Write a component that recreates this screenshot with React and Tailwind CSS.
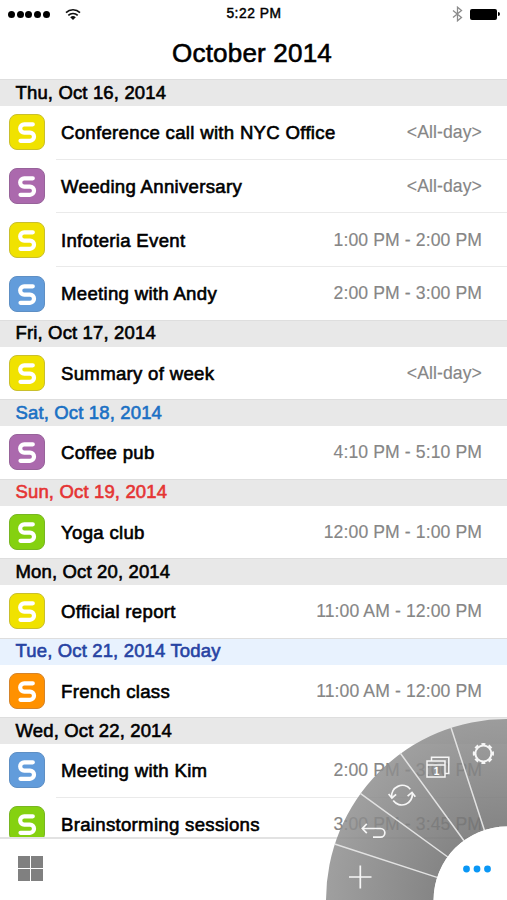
const COLORS = {
  yellow: "bg-[#f0e200] border-[#c9bf2c]",
  purple: "bg-[#ab69ad] border-[#97639a]",
  blue: "bg-[#629cdb] border-[#5e8fc4]",
  green: "bg-[#85d110] border-[#78b622]",
  orange: "bg-[#ff9100] border-[#d5842a]",
};

const DAYS = [
  {
    date: "Thu, Oct 16, 2014",
    events: [
      ["yellow", "Conference call with NYC Office", "<All-day>"],
      ["purple", "Weeding Anniversary", "<All-day>"],
      ["yellow", "Infoteria Event", "1:00 PM - 2:00 PM"],
      ["blue", "Meeting with Andy", "2:00 PM - 3:00 PM"],
    ],
  },
  { date: "Fri, Oct 17, 2014", events: [["yellow", "Summary of week", "<All-day>"]] },
  { date: "Sat, Oct 18, 2014", tone: "text-[#1a70c4]", events: [["purple", "Coffee pub", "4:10 PM - 5:10 PM"]] },
  { date: "Sun, Oct 19, 2014", tone: "text-[#e53434]", events: [["green", "Yoga club", "12:00 PM - 1:00 PM"]] },
  { date: "Mon, Oct 20, 2014", events: [["yellow", "Official report", "11:00 AM - 12:00 PM"]] },
  {
    date: "Tue, Oct 21, 2014 Today",
    tone: "text-[#2743a3]",
    bg: "bg-[#e8f2fe]",
    events: [["orange", "French class", "11:00 AM - 12:00 PM"]],
  },
  {
    date: "Wed, Oct 22, 2014",
    events: [
      ["blue", "Meeting with Kim", "2:00 PM - 3:00 PM"],
      ["green", "Brainstorming sessions", "3:00 PM - 3:45 PM"],
    ],
  },
];

function Badge({ color }) {
  return (
    <div className={`h-9 w-9 shrink-0 rounded-[8px] border ${COLORS[color]}`}>
      <svg viewBox="0 0 34 34" className="block h-full w-full" fill="none" stroke="#fff" strokeWidth="4.2" strokeLinecap="round" strokeLinejoin="round">
        <path d="M22.800 9.300H14.200a4 4 0 0 0-4 4v0.300a4 4 0 0 0 4 4h5.800a4 4 0 0 1 4 4v0.200a4 4 0 0 1-4 4H10.500" />
      </svg>
    </div>
  );
}

function EventRow({ color, title, time, divided }) {
  return (
    <>
      {divided && <div className="ml-14 h-px bg-[#eaeaea]" />}
      <div className="flex h-[52.7px] items-center pl-[9px] pr-[25px]">
        <Badge color={color} />
        <span className="ml-4 pt-[2px] text-[18.6px] tracking-[0.3px] text-black [-webkit-text-stroke:0.6px_currentColor]">{title}</span>
        <span className="ml-auto pt-px text-[17.6px] tracking-[0.1px] text-[#868686] [-webkit-text-stroke:0.15px_currentColor]">{time}</span>
      </div>
    </>
  );
}

function StatusBar() {
  return (
    <div className="flex h-7 items-center justify-between pl-2 pr-[7px]">
      <div className="flex w-[216px] items-center">
        <div className="flex gap-[1.7px]">
          {[0, 1, 2, 3, 4].map((i) => (
            <div key={i} className="h-[7px] w-[7px] rounded-full bg-black" />
          ))}
        </div>
        <svg className="ml-[15px] h-[13px] w-4" viewBox="0 0 16 13" fill="none" stroke="#111" strokeWidth="1.6">
          <path d="M1 4.600a10 10 0 0 1 14 0M3.300 7.400a6.700 6.700 0 0 1 9.400 0" />
          <path d="M8 12 5.200 9.300a4 4 0 0 1 5.600 0z" fill="#111" stroke="none" />
        </svg>
      </div>
      <span className="text-[13.8px] tracking-[0.55px] text-black [-webkit-text-stroke:0.45px_currentColor]">5:22 PM</span>
      <div className="flex w-[216px] items-center justify-end">
        <svg className="mr-[7px] h-4 w-[11px]" viewBox="0 0 11 16" fill="none" stroke="#8c8c8c" strokeWidth="1.300">
          <path d="M1 4.5l8.5 7L5.500 14.800V1.200l4 3.300-8.500 7" />
        </svg>
        <div className="h-[11px] w-[27px] rounded-[2px] bg-black" />
        <div className="ml-px h-1 w-[2px] rounded-r bg-black" />
      </div>
    </div>
  );
}

function RadialMenu() {
  return (
    <svg className="absolute right-0 bottom-0 h-[184px] w-[184px]" viewBox="323 716 184 184" fill="none">
      <defs>
        <radialGradient id="fan" gradientUnits="userSpaceOnUse" cx="507" cy="900" r="181.500">
          <stop offset="0.4" stopColor="#737373" stopOpacity="0.87" />
          <stop offset="1" stopColor="#909090" stopOpacity="0.86" />
        </radialGradient>
      </defs>
      <path d="M507 719A181 181 0 0 0 326 900H433.600A73.400 73.400 0 0 1 507 826.600z" fill="url(#fan)" />
      <path d="M451 727.600L484.500 830.500M400.400 753.300L464 840.800M360.300 793.400L447.800 857M334.600 844L437 877.400" stroke="#e2e2e2" strokeWidth="1.500" />
      <path d="M507 826.600A73.400 73.400 0 0 0 433.600 900H507z" fill="#fff" />
      <g fill="#0a97f5">
        <circle cx="466.500" cy="869" r="3.400" />
        <circle cx="477" cy="869" r="3.400" />
        <circle cx="487.500" cy="869" r="3.400" />
      </g>
      <g stroke="#f6f6f6" strokeWidth="1.700">
        <path d="M360.300 865.500V888.500M349 877H371.500" />
        <path d="M362.500 828.500H380.500a4.300 4.300 0 0 1 0 8.700H373M366.800 823.800L362.300 828.500L366.800 833.200" />
        <path d="M391.700 797.500a10.600 10.600 0 0 1 18.600-8.300M393.200 800.600a10.600 10.600 0 0 0 19.100-7.600" />
        <path d="M388.600 794l3.300 4 4.200-3.600M407.600 796.200l4.400-3.800 3.300 4.300" />
        <path d="M427 761h18v16h-18zM427 765h18M431.500 760.500v-3.300h17.300v16.300h-3.500" strokeWidth="1.500" />
        <circle cx="483.400" cy="753.500" r="8" strokeWidth="2" />
        <circle cx="483.400" cy="753.500" r="9.500" strokeWidth="2.200" pathLength="80" strokeDasharray="5.400 4.600" strokeDashoffset="2.700" />
      </g>
      <text x="436.500" y="774.600" textAnchor="middle" fontFamily="Liberation Sans" fontWeight="bold" fontSize="10" fill="#fff">1</text>
    </svg>
  );
}

export default function App() {
  return (
    <div className="relative flex h-[900px] w-[507px] flex-col overflow-hidden bg-white font-['Liberation_Sans',Arial,sans-serif] leading-none whitespace-pre">
      <StatusBar />
      <h1 className="flex h-[51.3px] items-center justify-center pb-[2px] pr-[3px] text-[26px] tracking-[0.2px] text-black [-webkit-text-stroke:0.6px_currentColor]">October 2014</h1>
      <main className="h-[758.2px] shrink-0 overflow-hidden">
        {DAYS.map((day) => (
          <section key={day.date}>
            <h2 className={`flex h-[26.8px] items-center border-t border-[#dedede] pl-[15.5px] text-[18.5px] tracking-[0.15px] [-webkit-text-stroke:0.6px_currentColor] ${day.bg || "bg-[#e8e8e8]"} ${day.tone || "text-black"}`}>{day.date}</h2>
            {day.events.map(([color, title, time], i) => (
              <EventRow key={title} color={color} title={title} time={time} divided={i > 0} />
            ))}
          </section>
        ))}
      </main>
      <footer className="flex flex-1 items-center border-t-2 border-[#e2e2e2] pb-[2px] pl-[18px]">
        <div className="grid grid-cols-2 gap-px">
          {[0, 1, 2, 3].map((i) => (
            <div key={i} className="h-3 w-3 bg-[#808080]" />
          ))}
        </div>
      </footer>
      <RadialMenu />
    </div>
  );
}
